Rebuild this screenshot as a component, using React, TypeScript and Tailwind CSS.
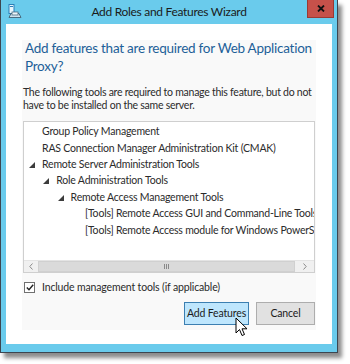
import React from "react";

const ROWS = [
  { level: 0, arrow: false, label: "Group Policy Management" },
  { level: 0, arrow: false, label: "RAS Connection Manager Administration Kit (CMAK)" },
  { level: 0, arrow: true, label: "Remote Server Administration Tools" },
  { level: 1, arrow: true, label: "Role Administration Tools" },
  { level: 2, arrow: true, label: "Remote Access Management Tools" },
  { level: 3, arrow: false, label: "[Tools] Remote Access GUI and Command-Line Tools" },
  { level: 3, arrow: false, label: "[Tools] Remote Access module for Windows PowerShell" },
];

function Expanded() {
  return (
    <svg width="6" height="6" viewBox="0 0 6 6">
      <polygon points="6,0 6,6 0,6" fill="#3c3c3c" />
    </svg>
  );
}

function TreeRow({ level, arrow, label }: { level: number; arrow: boolean; label: string }) {
  return (
    <div className="flex items-center h-[16.4px] whitespace-nowrap" style={{ paddingLeft: 5 + level * 14.3 }}>
      <span className="w-[13px] shrink-0 flex items-center">{arrow && <Expanded />}</span>
      <span>{label}</span>
    </div>
  );
}

export default function App() {
  return (
    <div className="w-[350px] h-[364px] bg-white relative overflow-hidden" style={{ fontFamily: 'Lato, "Open Sans", sans-serif' }}>
      <div className="w-[338px] h-[353px] bg-[#6acbec] border-x border-b border-[#3d4650] shadow-[4px_5px_4px_rgba(0,0,0,0.45)] flex flex-col">
        {/* title bar */}
        <div className="h-[24px] relative flex items-center justify-center shrink-0">
          <svg className="absolute left-[7px] top-[4px]" width="14" height="15" viewBox="0 0 14 15">
            <rect x="1" y="0.5" width="5" height="9" fill="#e8f6fc" stroke="#2a7fb8" strokeWidth="1" />
            <rect x="2" y="2" width="3" height="1" fill="#2a7fb8" />
            <path d="M1 13.5 L3 9.5 H11 L13 13.5 Z" fill="#cfe3ee" stroke="#4a6c80" strokeWidth="1" />
            <rect x="4" y="8" width="6" height="3" fill="#eef6fa" stroke="#4a6c80" strokeWidth="0.8" />
          </svg>
          <span className="text-[12px] tracking-[-0.3px] text-[#1b1b1b] -mt-[1px]">Add Roles and Features Wizard</span>
          <div className="absolute right-[3px] top-0 w-[27px] h-[18px] bg-[#c6514a] border border-t-0 border-[#9a3a34] flex items-center justify-center">
            <svg width="8" height="7" viewBox="0 0 8 7">
              <path d="M1 0.5 L7 6.5 M7 0.5 L1 6.5" stroke="#111" strokeWidth="1.8" />
            </svg>
          </div>
        </div>

        {/* client area */}
        <div className="mx-[5px] h-[320px] bg-white pt-[16px] px-[16px] shrink-0">
          <div className="h-[290px] bg-[#f9f9f9] px-[1px] flex flex-col">
            <div className="shrink-0 text-[13.5px] tracking-[-0.25px] leading-[18px] text-[#1d5f98] pl-[2px] -mt-[1px]">
              Add features that are required for Web Application Proxy?
            </div>
            <div className="shrink-0 mt-[11px] text-[10.5px] tracking-[-0.25px] leading-[13px] text-[#2b2b2b]">
              The following tools are required to manage this feature, but do not have to be installed on the same server.
            </div>
            <div className="shrink-0 mt-[9px] h-[152px] border border-[#cfcfcf] bg-white flex flex-col">
              <div className="flex-1 overflow-hidden pt-[2px] text-[10.5px] tracking-[-0.2px] text-[#2b2b2b]">
                {ROWS.map((r) => (
                  <TreeRow key={r.label} level={r.level} arrow={r.arrow} label={r.label} />
                ))}
              </div>
              <div className="h-[12px] shrink-0 flex bg-[#f0f0f0] border-t border-[#e4e4e4]">
                <div className="w-[14px] flex items-center justify-center">
                  <svg width="4" height="7" viewBox="0 0 4 7">
                    <path d="M3.5 0.5 L0.8 3.5 L3.5 6.5" fill="none" stroke="#8a8a8a" strokeWidth="1" />
                  </svg>
                </div>
                <div className="flex-1 bg-[#dadada] border border-[#d0d0d0] flex items-center justify-center gap-[1px]">
                  <span className="w-[1px] h-[5px] bg-[#8a8a8a]" />
                  <span className="w-[1px] h-[5px] bg-[#8a8a8a]" />
                  <span className="w-[1px] h-[5px] bg-[#8a8a8a]" />
                </div>
                <div className="w-[19px] flex items-center justify-center">
                  <svg width="4" height="7" viewBox="0 0 4 7">
                    <path d="M0.5 0.5 L3.2 3.5 L0.5 6.5" fill="none" stroke="#8a8a8a" strokeWidth="1" />
                  </svg>
                </div>
              </div>
            </div>
            <div className="shrink-0 mt-[8px] h-[12px] leading-[12px] flex items-center text-[10.5px] tracking-[-0.15px] text-[#2b2b2b]">
              <div className="w-[11px] h-[11px] border border-[#707070] bg-white flex items-center justify-center ml-[1px]">
                <svg width="8" height="7" viewBox="0 0 8 7">
                  <path d="M0.8 3.5 L3 5.8 L7.2 0.8" fill="none" stroke="#222" strokeWidth="1.4" />
                </svg>
              </div>
              <span className="ml-[7px]">Include management tools (if applicable)</span>
            </div>
            <div className="shrink-0 mt-[9px] flex justify-end gap-[7px] text-[10.5px] tracking-[-0.15px] text-[#1b1b1b] whitespace-nowrap">
              <div className="w-[65px] h-[23px] bg-[#bee6fd] border border-[#3c7fb1] flex items-center justify-center">
                Add Features
              </div>
              <div className="w-[59px] h-[23px] bg-[#e1e1e1] border border-[#adadad] flex items-center justify-center">
                Cancel
              </div>
            </div>
          </div>
        </div>
      </div>

      {/* mouse cursor */}
      <svg className="absolute left-[235px] top-[317px]" width="13" height="20" viewBox="0 0 13 20">
        <path d="M1 1 L1 16 L4.5 12.5 L7 18.5 L9.5 17.5 L7 11.8 L12 11.8 Z" fill="#fff" stroke="#000" strokeWidth="1" strokeLinejoin="round" />
      </svg>
    </div>
  );
}
